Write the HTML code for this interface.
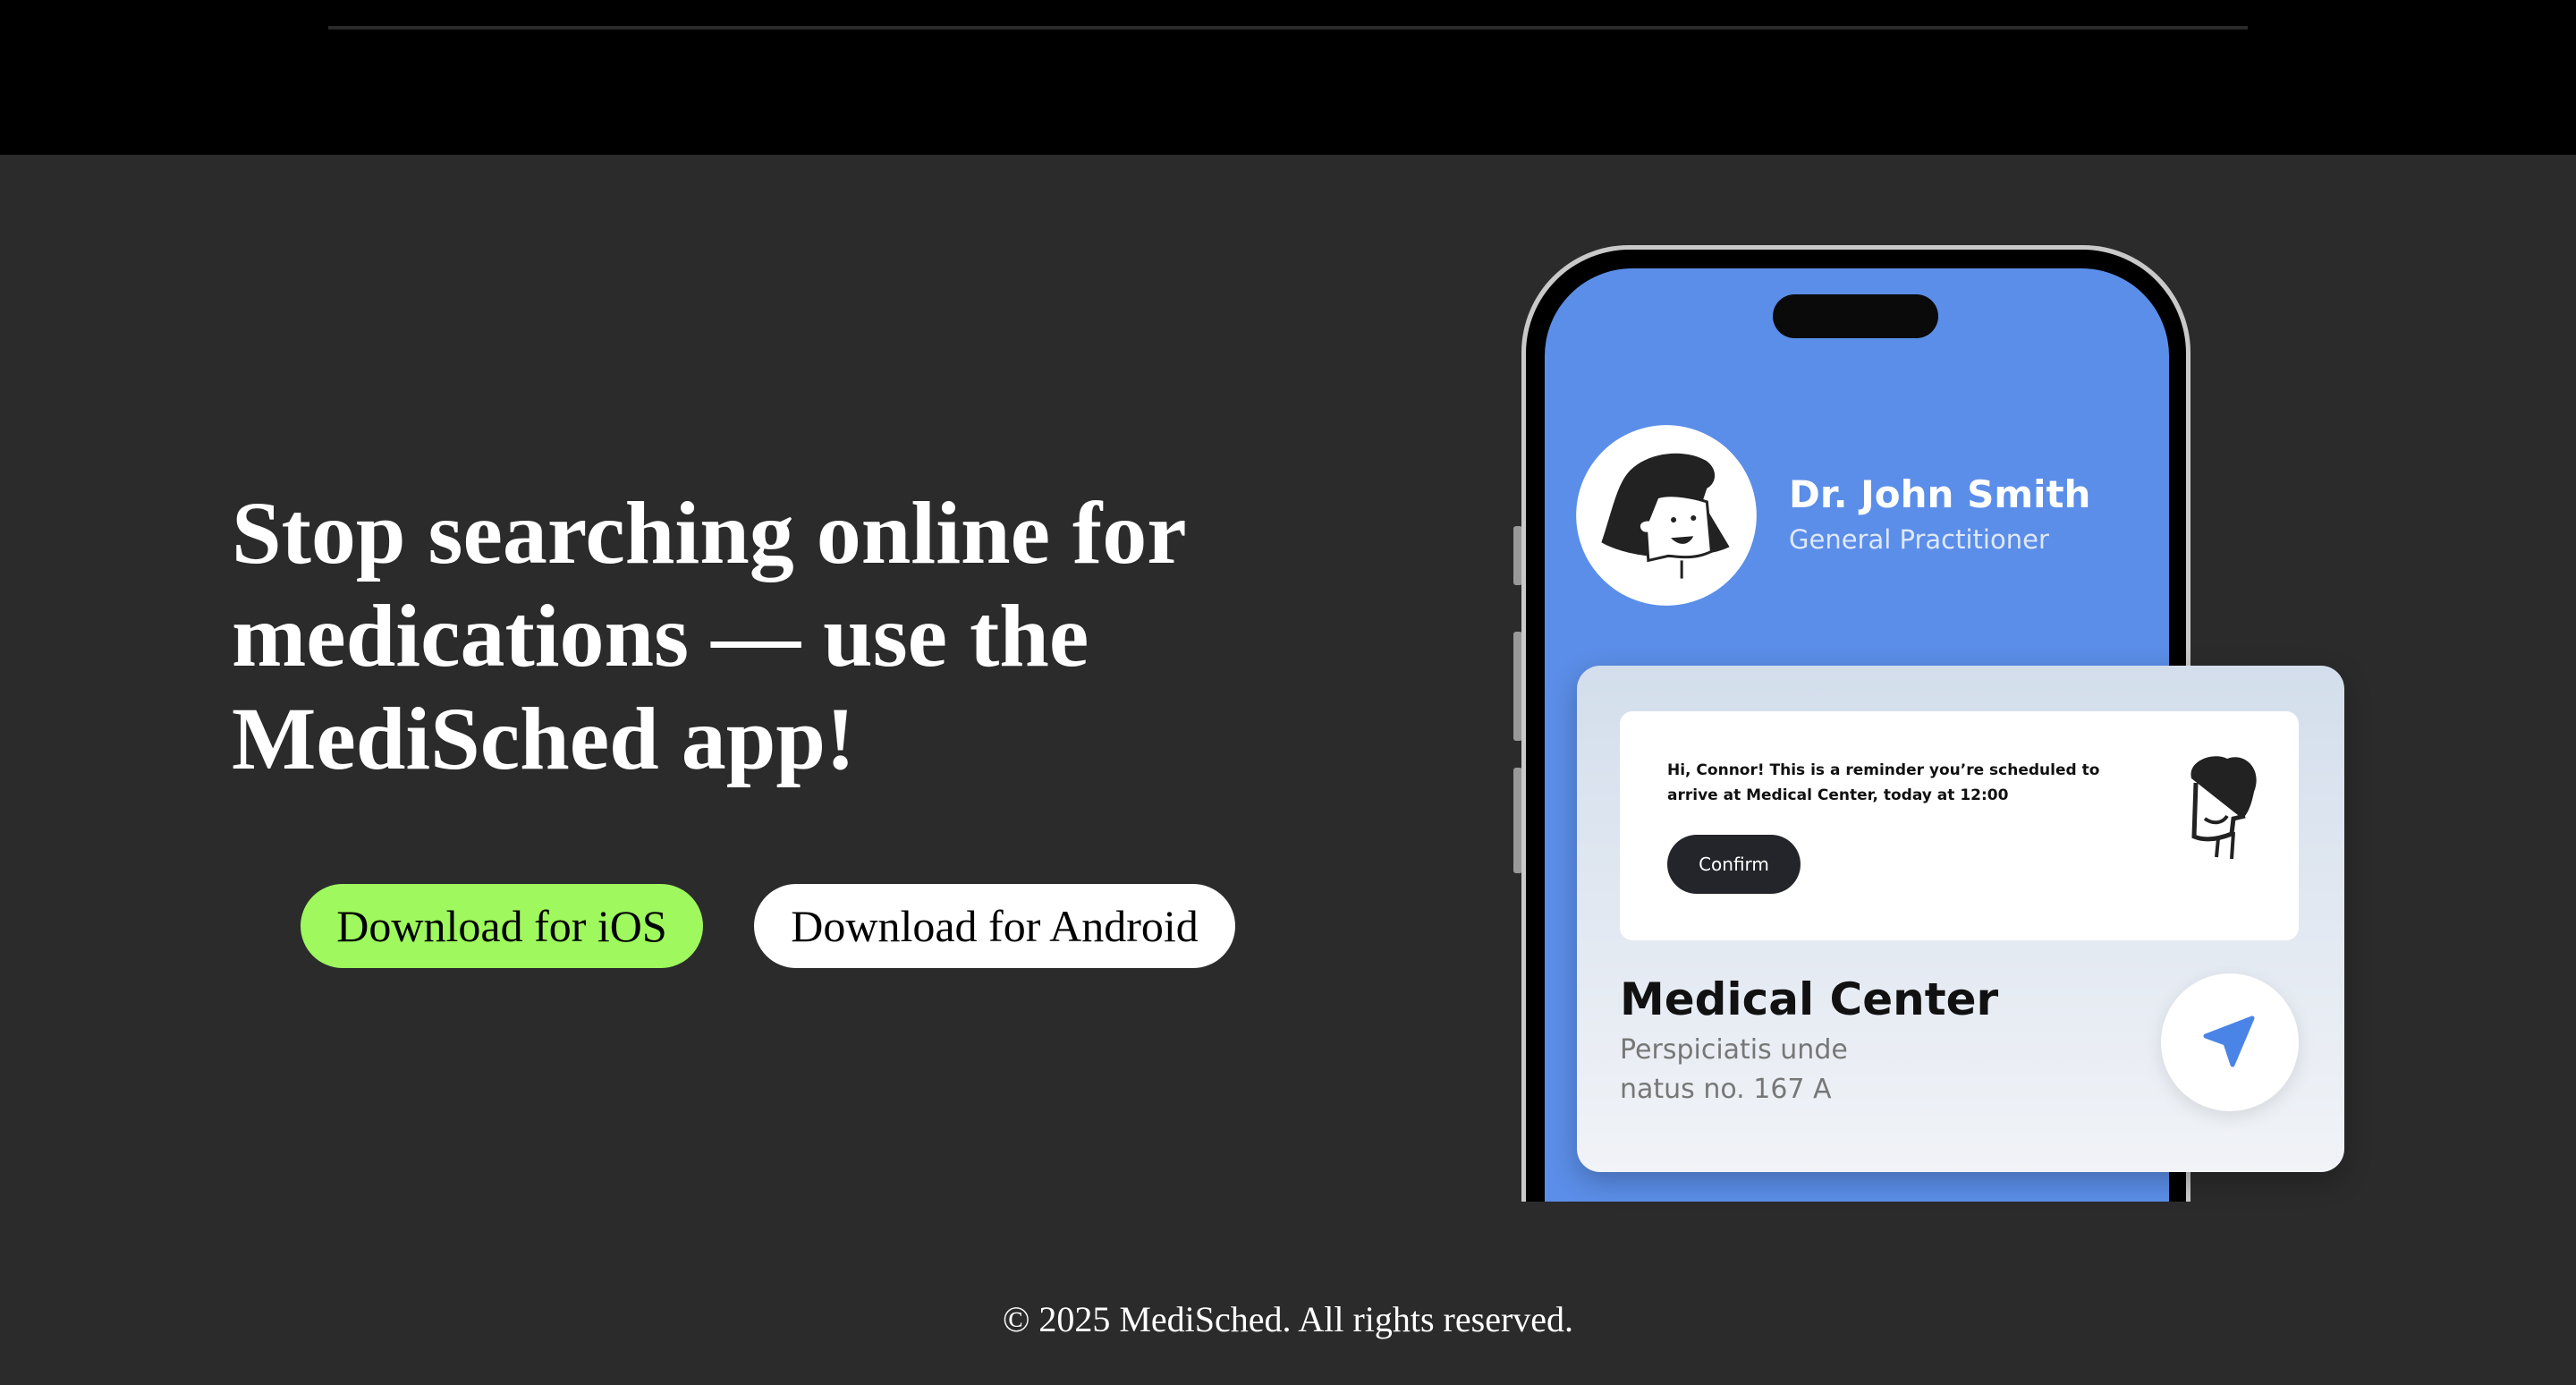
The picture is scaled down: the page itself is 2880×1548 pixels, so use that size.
<!DOCTYPE html>
<html><head><meta charset="utf-8"><style>
*{margin:0;padding:0;box-sizing:border-box}
html{width:2880px;height:1548px;overflow:hidden}
body{width:2880px;height:1548px;background:#2b2b2b;position:relative;overflow:hidden;font-family:"Liberation Serif",serif}
.top{position:absolute;left:0;top:0;width:2880px;height:173px;background:#000}
.line{position:absolute;left:367px;top:29px;width:2146px;height:4px;background:#2a2a2a}
h1{position:absolute;left:259px;top:538px;font-size:100px;line-height:115px;color:#fff;font-weight:bold;width:1300px}
.btn{position:absolute;top:988px;height:94px;border-radius:47px;font-size:50px;line-height:94px;text-align:center;color:#000}
.ios{left:336px;width:450px;background:#9ef85e}
.and{left:843px;width:538px;background:#fff}
.foot{position:absolute;left:0;width:2880px;top:1451px;text-align:center;font-size:40px;color:#fff}
.a{position:absolute}
.sans{font-family:"DejaVu Sans","Liberation Sans",sans-serif}
</style></head><body>
<div class="top"><div class="line"></div></div>
<h1>Stop searching online for medications — use the MediSched app!</h1>
<div class="btn ios">Download for iOS</div>
<div class="btn and">Download for Android</div>

<!-- phone -->
<div class="a" style="left:1692px;top:588px;width:10px;height:66px;background:#999;border-radius:3px"></div>
<div class="a" style="left:1692px;top:706px;width:10px;height:122px;background:#999;border-radius:3px"></div>
<div class="a" style="left:1692px;top:858px;width:10px;height:118px;background:#999;border-radius:3px"></div>
<div class="a" style="left:1701px;top:274px;width:748px;height:1250px;border-radius:120px;background:#c9c9c9"></div>
<div class="a" style="left:1706px;top:279px;width:738px;height:1240px;border-radius:116px;background:#000"></div>
<div class="a" style="left:1727px;top:300px;width:698px;height:1220px;border-radius:98px;background:#5b8ee8"></div>
<div class="a" style="left:1982px;top:329px;width:185px;height:49px;border-radius:25px;background:#0a0a0a"></div>
<div class="a" style="left:0;top:1343px;width:2880px;height:205px;background:#2b2b2b"></div>

<svg class="a" style="left:1742px;top:460px" width="242" height="232" viewBox="0 0 240 230">
<circle cx="120" cy="115" r="100" fill="#fff"/>
<path d="M48 145 C60 110 65 80 80 65 C100 45 140 40 165 55 C178 65 175 80 165 85 L160 100 L190 150 C170 160 140 160 130 155 L100 160 C80 158 60 152 48 145Z" fill="#222"/>
<path d="M110 95 C125 90 150 95 165 100 L170 155 C150 165 130 160 122 160 L100 165 L98 135 C88 135 85 120 100 120Z" fill="#fff" stroke="#222" stroke-width="3"/>
<circle cx="128" cy="120" r="3" fill="#222"/><circle cx="150" cy="118" r="3" fill="#222"/>
<path d="M125 140 C135 150 145 148 150 138Z" fill="#222"/>
<path d="M137 165 L137 185" stroke="#222" stroke-width="3"/>
</svg>
<div class="a sans" style="left:2000px;top:528px;font-size:42px;font-weight:bold;color:#fff">Dr. John Smith</div>
<div class="a sans" style="left:2000px;top:586px;font-size:29px;color:#dfe8fb">General Practitioner</div>

<div class="a" style="left:1763px;top:744px;width:858px;height:566px;border-radius:26px;background:linear-gradient(#d3deec,#f1f3f7);box-shadow:0 10px 30px rgba(0,0,0,.25)"></div>
<div class="a" style="left:1811px;top:795px;width:759px;height:256px;border-radius:14px;background:#fff"></div>
<div class="a sans" style="left:1864px;top:847px;font-size:17px;line-height:28px;color:#111;font-weight:bold">Hi, Connor! This is a reminder you’re scheduled to<br>arrive at Medical Center, today at 12:00</div>
<div class="a sans" style="left:1864px;top:933px;width:149px;height:66px;border-radius:33px;background:#23252a;color:#fff;font-size:20px;line-height:66px;text-align:center">Confirm</div>
<svg class="a" style="left:2435px;top:840px" width="100" height="130" viewBox="0 0 100 130">
<path d="M15 30 C10 10 40 0 55 8 C75 0 95 20 85 45 C82 60 78 70 72 75" fill="#222"/>
<path d="M20 35 L18 95 C30 100 45 98 60 92 L62 75 L75 72" fill="none" stroke="#222" stroke-width="5"/>
<path d="M30 75 C40 82 50 80 55 72" fill="none" stroke="#222" stroke-width="4"/>
<path d="M45 97 L43 118 M62 90 L60 120" stroke="#222" stroke-width="4"/>
</svg>
<div class="a sans" style="left:1811px;top:1088px;font-size:50px;font-weight:bold;color:#111">Medical Center</div>
<div class="a sans" style="left:1811px;top:1152px;font-size:30px;line-height:44px;color:#777">Perspiciatis unde<br>natus no. 167 A</div>
<div class="a" style="left:2416px;top:1088px;width:154px;height:154px;border-radius:50%;background:#fff;box-shadow:0 6px 20px rgba(0,0,0,.1)"></div>
<svg class="a" style="left:2460px;top:1132px" width="66" height="66" viewBox="0 0 66 66">
<path d="M58 6 L6 26 L28 34 L36 58 Z" fill="#4a84e6" stroke="#4a84e6" stroke-width="5" stroke-linejoin="round"/>
</svg>
<div class="foot">© 2025 MediSched. All rights reserved.</div>
</body></html>
